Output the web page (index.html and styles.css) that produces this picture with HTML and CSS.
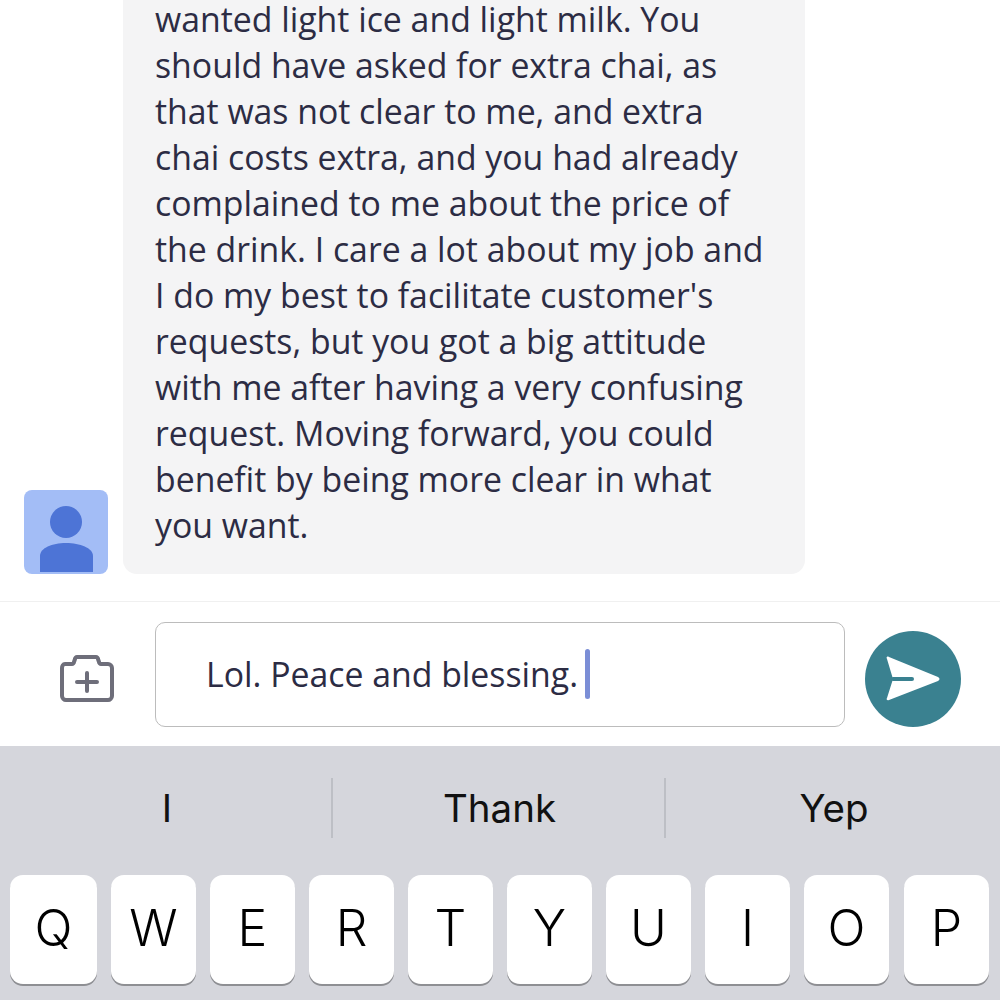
FILE: index.html
```html
<!DOCTYPE html>
<html>
<head>
<title>Chat</title>
<meta charset="UTF-8">
<link rel="stylesheet" href="styles.css">
</head>
<body>
<div class="messages">
<div class="message">
<div class="avatar">
<svg width="84" height="84" viewBox="0 0 84 84"><circle cx="42" cy="32" r="16" fill="#4d74d6"/><path d="M16 82V66C16 58 28 53 42 53S69 58 69 66V82Z" fill="#4d74d6"/></svg>
</div>
<div class="bubble">wanted light ice and light milk. You<br>should have asked for extra chai, as<br>that was not clear to me, and extra<br>chai costs extra, and you had already<br>complained to me about the price of<br>the drink. I care a lot about my job and<br>I do my best to facilitate customer's<br>requests, but you got a big attitude<br>with me after having a very confusing<br>request. Moving forward, you could<br>benefit by being more clear in what<br>you want.</div>
</div>
</div>
<div class="composer">
<div class="attach">
<svg width="54" height="48" viewBox="0 0 54 48" fill="none" stroke="#6e6e7a" stroke-width="4" stroke-linecap="round" stroke-linejoin="round"><path d="M5 9H12C13 9 14 8 14 7L15 4C15 3 16 2 17 2H36C37 2 38 3 38 4L39 7C39 8 40 9 41 9H48C50 9 52 11 52 13V41C52 43 50 45 48 45H6C4 45 2 43 2 41V13C2 11 3 9 5 9Z"/><path d="M27 18V36M17 27H37"/></svg>
</div>
<div class="input"><span>Lol. Peace and blessing.</span><i class="caret"></i></div>
<div class="send">
<svg width="96" height="96" viewBox="0 0 96 96"><circle cx="48" cy="48" r="48" fill="#3a8190"/><path d="M24 26L73 46C75 47 75 49 73 50L24 69C22 70 21 68 22 67L28 48L22 28C21 26 22 25 24 26Z" fill="#fff"/><path d="M28 48H47" fill="none" stroke="#3a8190" stroke-width="4" stroke-linecap="round"/></svg>
</div>
</div>
<div class="keyboard">
<div class="suggestions">
<div class="suggestion">I</div>
<div class="suggestion">Thank</div>
<div class="suggestion">Yep</div>
</div>
<div class="keys">
<div class="key">Q</div>
<div class="key">W</div>
<div class="key">E</div>
<div class="key">R</div>
<div class="key">T</div>
<div class="key">Y</div>
<div class="key">U</div>
<div class="key">I</div>
<div class="key">O</div>
<div class="key">P</div>
</div>
</div>
</body>
</html>
```
FILE: styles.css
```css
html, body{
    margin: 0;
    height: 1000px;
    overflow: hidden;
    background: #fff;
}
body{
    font-family: "Open Sans", sans-serif;
    color: #2c2c44;
}
.messages{
    height: 601px;
    display: flex;
    flex-direction: column;
    justify-content: flex-end;
    overflow: hidden;
    border-bottom: 1px solid #f0f0f0;
}
.message{
    display: flex;
    align-items: flex-end;
    gap: 15px;
    padding: 0 0 27px 24px;
}
.avatar{
    width: 84px;
    height: 84px;
    background: #a3bdf6;
    border-radius: 8px;
    overflow: hidden;
    flex-shrink: 0;
}
.avatar svg{
    display: block;
}
.bubble{
    width: 618px;
    padding: 0 32px 26px;
    background: #f4f4f5;
    border-radius: 0 0 14px 14px;
    font-size: 33.8px;
    line-height: 46px;
    white-space: nowrap;
    flex-shrink: 0;
}
.composer{
    height: 144px;
    display: flex;
    align-items: flex-start;
}
.attach{
    width: 155px;
    padding: 53px 0 0 60px;
    box-sizing: border-box;
}
.attach svg, .send svg{
    display: block;
}
.input{
    width: 690px;
    height: 105px;
    margin-top: 20px;
    box-sizing: border-box;
    border: 1px solid #bcbcbc;
    border-radius: 10px;
    padding: 0 0 2px 50px;
    display: flex;
    align-items: center;
    gap: 7px;
    font-size: 33.8px;
}
.caret{
    width: 5px;
    height: 50px;
    background: #7b8ed6;
    border-radius: 3px;
}
.send{
    margin: 29px 0 0 20px;
}
.keyboard{
    height: 254px;
    background: #d5d6dc;
    font-family: Inter, sans-serif;
    color: #111;
}
.suggestions{
    height: 129px;
    padding-top: 32px;
    box-sizing: border-box;
    display: flex;
    align-items: flex-start;
}
.suggestion{
    width: 333px;
    height: 60px;
    box-sizing: border-box;
    padding-left: 2px;
    line-height: 60px;
    text-align: center;
    font-size: 38.5px;
    border-left: 2px solid #bdbfc5;
}
.suggestion:first-child{
    width: 331px;
    border-left: none;
    padding-left: 3px;
}
.suggestion:last-child{
    flex: 1;
}
.keys{
    display: flex;
    gap: 14px;
    padding: 0 10px;
}
.key{
    width: 85px;
    height: 109px;
    line-height: 107px;
    text-align: center;
    font-size: 50px;
    font-weight: 300;
    color: #000;
    background: #fff;
    border-radius: 13px;
    box-shadow: 0 2px 0 #8e8f93;
}
.key:first-child{
    width: 87px;
}
.key:last-child{
    margin-left: 1px;
}
```
